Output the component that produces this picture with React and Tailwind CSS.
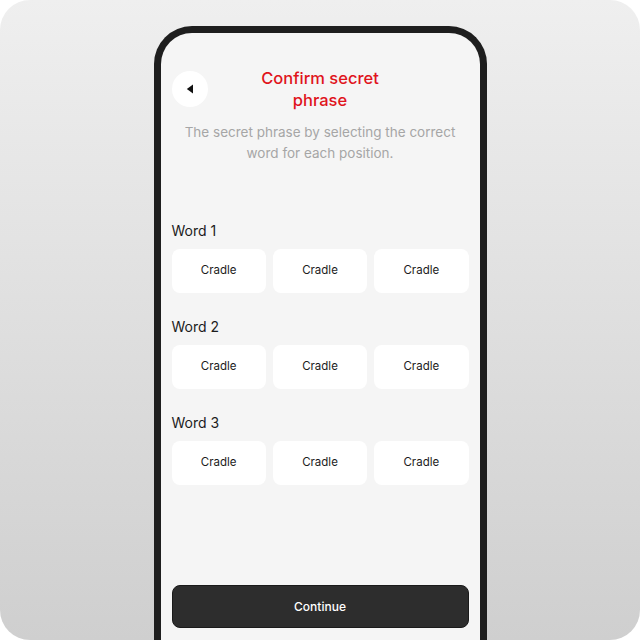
export default function App() {
  const rows = ["Word 1", "Word 2", "Word 3"];
  return (
    <div className="w-[640px] h-[640px] bg-white" style={{ fontFamily: "Inter, 'Noto Sans', sans-serif" }}>
      <div className="w-full h-full rounded-[30px] overflow-hidden bg-gradient-to-b from-[#efefef] to-[#cfcfcf] pt-[26px]">
        <div className="mx-auto w-[333px] h-[640px] rounded-t-[38px] border-[7px] border-b-0 border-[#1e1e1e] bg-[#f5f5f5] px-[11px] pt-[34px]">
          <div className="grid grid-cols-[36px_1fr_36px] items-center">
            <button className="w-9 h-9 rounded-full bg-white flex items-center justify-center">
              <svg width="8" height="10" viewBox="0 0 8 10">
                <path d="M7 0.5 L0.8 5 L7 9.5 Z" fill="#111" />
              </svg>
            </button>
            <h1 className="text-center text-[16.5px] leading-[22px] font-medium text-[#e0141c]">
              Confirm secret
              <br />
              phrase
            </h1>
            <div />
          </div>
          <p className="mt-[11px] px-2 text-center text-[13.5px] leading-[21px] text-[#a6a6a6]">
            The secret phrase by selecting the correct word for each position.
          </p>
          <div className="mt-[57px] flex flex-col gap-6">
            {rows.map((r) => (
              <div key={r}>
                <div className="text-[14px] leading-5 text-[#1c1c1c]">{r}</div>
                <div className="mt-2 grid grid-cols-3 gap-[7px]">
                  <button className="h-11 rounded-lg bg-white text-[11.5px] text-[#1c1c1c]">Cradle</button>
                  <button className="h-11 rounded-lg bg-white text-[11.5px] text-[#1c1c1c]">Cradle</button>
                  <button className="h-11 rounded-lg bg-white text-[11.5px] text-[#1c1c1c]">Cradle</button>
                </div>
              </div>
            ))}
          </div>
          <button className="mt-[100px] w-full h-[43px] rounded-lg bg-[#2d2d2d] border border-[#1a1a1a] text-white text-[12px] font-medium">
            Continue
          </button>
        </div>
      </div>
    </div>
  );
}
